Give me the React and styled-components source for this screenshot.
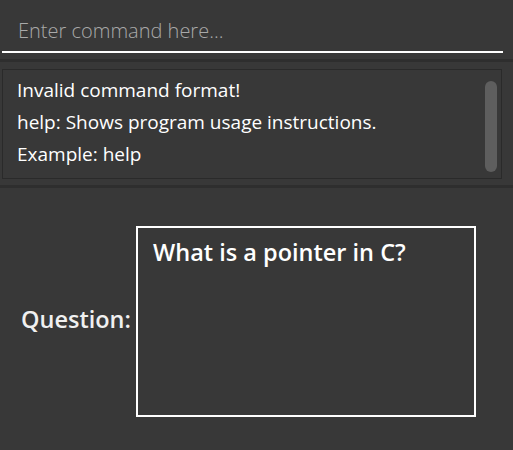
import styled, { createGlobalStyle } from "styled-components";

const GlobalStyle = createGlobalStyle`
  html, body {
    margin: 0;
    padding: 0;
    background: #383838;
  }
  body {
    font-family: "Open Sans", "Noto Sans", sans-serif;
  }
`;

const Page = styled.div`
  width: 513px;
  height: 450px;
  background: #383838;
  display: flex;
  flex-direction: column;
  overflow: hidden;
`;

const CommandBar = styled.div`
  padding: 11px 10px 0 2px;
  height: 48px;
  box-sizing: border-box;
`;

const CommandInput = styled.div`
  height: 42px;
  border-bottom: 2px solid #ffffff;
  padding-left: 16px;
  box-sizing: border-box;
  font-size: 20px;
  font-weight: 300;
  color: #a9a9a9;
  line-height: 39px;
`;

const Divider = styled.div`
  height: 3px;
  background: #2e2e2e;
  margin-top: ${(p) => p.$top}px;
`;

const ResultWrap = styled.div`
  padding: 7px 11px 6px 2px;
`;

const ResultBox = styled.div`
  height: 110px;
  border: 1px solid #2a2a2a;
  box-sizing: border-box;
  display: flex;
  justify-content: space-between;
  padding: 4px 4px 6px 14px;
`;

const ResultText = styled.div`
  color: #ffffff;
  font-size: 19px;
  line-height: 32px;
`;

const ScrollThumb = styled.div`
  width: 12px;
  margin-top: 7px;
  border-radius: 6px;
  background: #5e5e5e;
`;

const CardArea = styled.div`
  flex: 1;
  display: flex;
  align-items: flex-start;
  padding: 38px 0 0 21px;
`;

const Label = styled.div`
  color: #f0f0f0;
  font-size: 23.5px;
  font-weight: 600;
  width: 115px;
  margin-top: 77px;
`;

const QuestionBox = styled.div`
  width: 340px;
  height: 191px;
  border: 2px solid #ffffff;
  box-sizing: border-box;
  padding: 8px 15px;
  color: #ffffff;
  font-size: 23.5px;
  font-weight: 600;
`;

export default function App() {
  return (
    <Page>
      <GlobalStyle />
      <CommandBar>
        <CommandInput>Enter command here...</CommandInput>
      </CommandBar>
      <Divider $top={11} />
      <ResultWrap>
        <ResultBox>
          <ResultText>
            Invalid command format!
            <br />
            help: Shows program usage instructions.
            <br />
            Example: help
          </ResultText>
          <ScrollThumb />
        </ResultBox>
      </ResultWrap>
      <Divider $top={0} />
      <CardArea>
        <Label>Question:</Label>
        <QuestionBox>What is a pointer in C?</QuestionBox>
      </CardArea>
    </Page>
  );
}
